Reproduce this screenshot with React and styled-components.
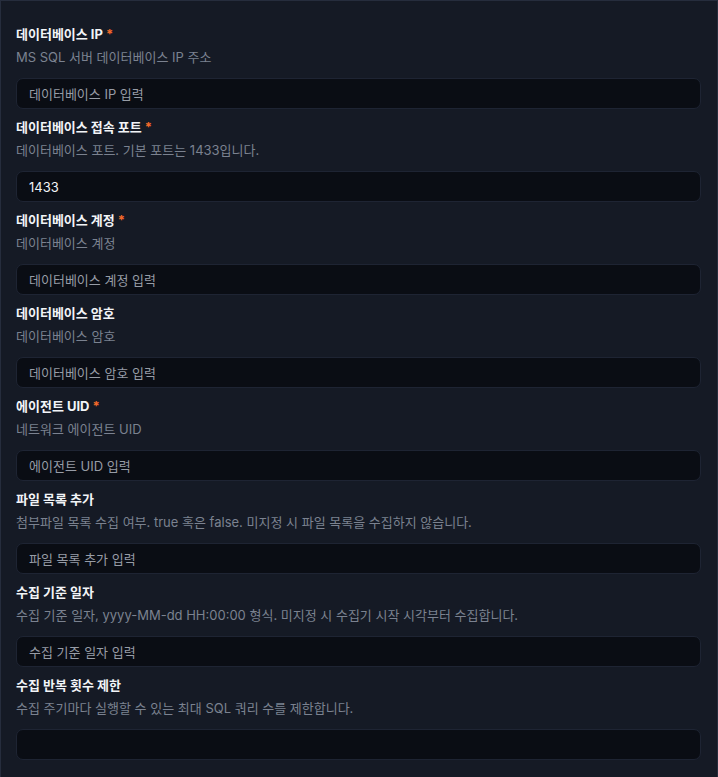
import styled, { createGlobalStyle } from 'styled-components';

const fields = [
  { label: '데이터베이스 IP', required: true, desc: 'MS SQL 서버 데이터베이스 IP 주소', placeholder: '데이터베이스 IP 입력' },
  { label: '데이터베이스 접속 포트', required: true, desc: '데이터베이스 포트. 기본 포트는 1433입니다.', value: '1433' },
  { label: '데이터베이스 계정', required: true, desc: '데이터베이스 계정', placeholder: '데이터베이스 계정 입력' },
  { label: '데이터베이스 암호', desc: '데이터베이스 암호', placeholder: '데이터베이스 암호 입력' },
  { label: '에이전트 UID', required: true, desc: '네트워크 에이전트 UID', placeholder: '에이전트 UID 입력' },
  { label: '파일 목록 추가', desc: '첨부파일 목록 수집 여부. true 혹은 false. 미지정 시 파일 목록을 수집하지 않습니다.', placeholder: '파일 목록 추가 입력' },
  { label: '수집 기준 일자', desc: '수집 기준 일자, yyyy-MM-dd HH:00:00 형식. 미지정 시 수집기 시작 시각부터 수집합니다.', placeholder: '수집 기준 일자 입력' },
  { label: '수집 반복 횟수 제한', desc: '수집 주기마다 실행할 수 있는 최대 SQL 쿼리 수를 제한합니다.', placeholder: '' },
];

function App() {
  return (
    <>
      <GlobalStyle />
      <Panel>
        {fields.map((f) => (
          <Field key={f.label}>
            <Label>
              {f.label}
              {f.required && <Star>*</Star>}
            </Label>
            <Desc>{f.desc}</Desc>
            <Input placeholder={f.placeholder} defaultValue={f.value} />
          </Field>
        ))}
      </Panel>
    </>
  );
}

const GlobalStyle = createGlobalStyle`
  html, body {
    margin: 0;
    background: #151a25;
  }
  body {
    font-family: Inter, "Noto Sans CJK KR", sans-serif;
  }
`

const Panel = styled.div`
  box-sizing: border-box;
  width: 718px;
  min-height: 800px;
  background: #151a25;
  border: 1px solid #262d3d;
  border-bottom: none;
  padding: 23px 16px 0 15px;
  display: flex;
  flex-direction: column;
  gap: 8px;
`

const Field = styled.div`
  display: flex;
  flex-direction: column;
`

const Label = styled.div`
  font-size: 13px;
  line-height: 20px;
  font-weight: 700;
  color: #f2f4f7;
  margin-bottom: 3px;
`

const Star = styled.span`
  color: #f4692a;
  margin-left: 3px;
`

const Desc = styled.div`
  font-size: 13px;
  line-height: 20px;
  color: #7b8290;
  margin-bottom: 11px;
`

const Input = styled.input`
  box-sizing: border-box;
  height: 31px;
  width: 100%;
  background: #0a0d14;
  border: 1px solid #1e2433;
  border-radius: 7px;
  padding: 0 12px;
  font-family: Inter, "Noto Sans CJK KR", sans-serif;
  font-size: 13px;
  color: #f2f4f7;
  outline: none;

  &::placeholder {
    color: #979ca6;
  }
`

export default App;
